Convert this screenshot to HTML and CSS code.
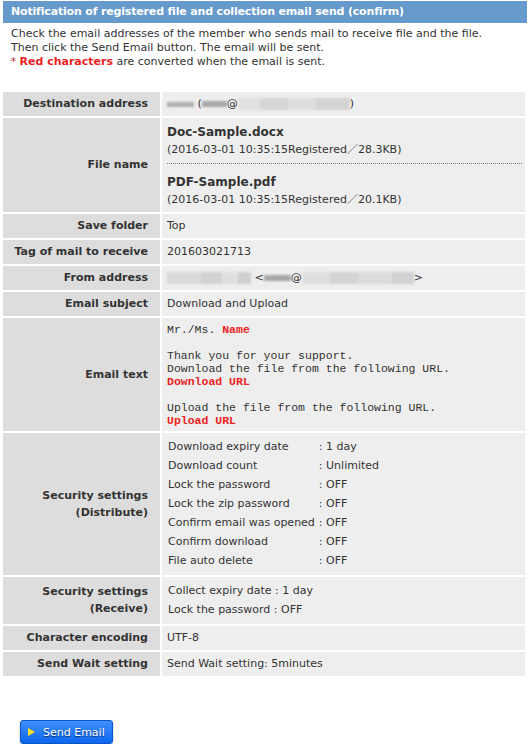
FILE: index.html
```html
<!DOCTYPE html>
<html lang="en">
<head>
<meta charset="utf-8">
<title>Notification of registered file and collection email send (confirm)</title>
<link rel="stylesheet" href="styles.css">
</head>
<body>
<div class="page">
  <h1 class="title">Notification of registered file and collection email send (confirm)</h1>
  <div class="intro">
    <p>Check the email addresses of the member who sends mail to receive file and the file.</p>
    <p>Then click the Send Email button. The email will be sent.</p>
    <p><span class="ast">*</span> <span class="red">Red characters</span> are converted when the email is sent.</p>
  </div>

  <table class="info">
    <tr>
      <th>Destination address</th>
      <td><span class="blur b-name1"></span> (<span class="blur b-user1"></span>@<span class="blur b-dom1"></span>)</td>
    </tr>
    <tr>
      <th>File name</th>
      <td class="files">
        <div class="file">
          <div class="fname">Doc-Sample.docx</div>
          <div class="fmeta">(2016-03-01 10:35:15Registered／28.3KB)</div>
        </div>
        <div class="file">
          <div class="fname">PDF-Sample.pdf</div>
          <div class="fmeta">(2016-03-01 10:35:15Registered／20.1KB)</div>
        </div>
      </td>
    </tr>
    <tr><th>Save folder</th><td>Top</td></tr>
    <tr><th>Tag of mail to receive</th><td>201603021713</td></tr>
    <tr>
      <th>From address</th>
      <td><span class="blur b-name2"></span> &lt;<span class="blur b-user2"></span>@<span class="blur b-dom2"></span>&gt;</td>
    </tr>
    <tr><th>Email subject</th><td>Download and Upload</td></tr>
    <tr>
      <th>Email text</th>
      <td class="mailcell"><pre class="mail">Mr./Ms. <b class="red">Name</b>

Thank you for your support.
Download the file from the following URL.
<b class="red">Download URL</b>

Upload the file from the following URL.
<b class="red">Upload URL</b></pre></td>
    </tr>
    <tr>
      <th class="two">Security settings<br>(Distribute)</th>
      <td class="setcell">
        <div class="settings">
          <span>Download expiry date</span><span>: 1 day</span>
          <span>Download count</span><span>: Unlimited</span>
          <span>Lock the password</span><span>: OFF</span>
          <span>Lock the zip password</span><span>: OFF</span>
          <span>Confirm email was opened</span><span>: OFF</span>
          <span>Confirm download</span><span>: OFF</span>
          <span>File auto delete</span><span>: OFF</span>
        </div>
      </td>
    </tr>
    <tr>
      <th class="two">Security settings<br>(Receive)</th>
      <td class="setcell">
        <div class="lines">
          <div>Collect expiry date : 1 day</div>
          <div>Lock the password : OFF</div>
        </div>
      </td>
    </tr>
    <tr><th>Character encoding</th><td>UTF-8</td></tr>
    <tr><th>Send Wait setting</th><td>Send Wait setting: 5minutes</td></tr>
  </table>

  <div class="actions">
    <button type="button" class="send"><span class="tri"></span>Send Email</button>
  </div>
</div>
</body>
</html>
```

FILE: styles.css
```css
* { box-sizing: border-box; }

body {
  margin: 0;
  background: #fff;
  color: #333;
  font-family: "DejaVu Sans", Verdana, sans-serif;
  font-size: 11px;
}

.page {
  padding: 1px 3px 0 3px;
}

.title {
  margin: 0;
  height: 22px;
  line-height: 22px;
  padding-left: 8px;
  background: #6699cc;
  color: #fff;
  font-size: 11px;
  font-weight: bold;
  letter-spacing: -0.17px;
}

.intro {
  margin-top: 4px;
  padding-left: 8px;
  line-height: 14px;
}
.intro p { margin: 0; }

.red { color: #ee2222; font-weight: bold; }
.ast { color: #b02222; font-size: 10px; }

.info {
  margin-top: 23px;
  width: 522px;
  table-layout: fixed;
  border-collapse: separate;
  border-spacing: 0;
}

.info th,
.info td {
  border-bottom: 2px solid #fff;
  vertical-align: middle;
  line-height: 15px;
  padding: 4px 5px 5px 5px;
}
.info tr:last-child th,
.info tr:last-child td { border-bottom: 0; }

.info th {
  width: 159px;
  background: #dddddd;
  border-right: 2px solid #fff;
  text-align: right;
  padding-right: 12px;
  font-weight: bold;
}
.info th.two { line-height: 17px; }

.info td {
  background: #eeeeee;
  padding-left: 5px;
}

/* blurred (masked) address parts */
.blur {
  display: inline-block;
  vertical-align: middle;
  filter: blur(1px);
  background: #c8c8c8;
}
.b-name1 { width: 27px; height: 5px; background: #b0b0b0; }
.b-user1 { width: 25px; height: 6px; background: #a8a8a8; }
.b-dom1 {
  width: 112px; height: 12px;
  background: linear-gradient(90deg, #e2e2e2 0 20%, #d6d6d6 20% 45%, #dedede 45% 70%, #d4d4d4 70% 100%);
}
.b-name2 {
  width: 84px; height: 12px;
  background: linear-gradient(90deg, #dadada 0 40%, #d2d2d2 40% 65%, #e0e0e0 65% 85%, #d0d0d0 85% 100%);
}
.b-user2 { width: 27px; height: 6px; background: #a8a8a8; }
.b-dom2 {
  width: 112px; height: 12px;
  background: linear-gradient(90deg, #e0e0e0 0 25%, #d4d4d4 25% 50%, #dcdcdc 50% 80%, #d2d2d2 80% 100%);
}

/* files */
.info td.files { padding: 0 3px 0 5px; }
.file { padding: 5px 0 5px; }
.file + .file {
  border-top: 1px dotted #777;
  padding-top: 9px;
  padding-bottom: 4px;
}
.fname {
  font-size: 12px;
  font-weight: bold;
  line-height: 18px;
}
.fmeta {
  line-height: 17px;
  font-family: "DejaVu Sans", "Noto Sans CJK JP", sans-serif;
}

/* email text */
.info td.mailcell { padding-top: 5px; padding-bottom: 4px; }
.mail {
  margin: 0;
  font-family: "Liberation Mono", "Courier New", monospace;
  font-size: 11.5px;
  line-height: 13px;
  color: #333;
}
.mail .red { color: #ee2222; }

/* settings */
.info td.setcell { padding-top: 4px; padding-bottom: 5px; padding-left: 6px; }
.settings {
  display: grid;
  grid-template-columns: max-content max-content;
  column-gap: 4px;
  line-height: 19px;
}
.lines { line-height: 19px; }

/* button */
.actions {
  padding: 44px 0 0 17px;
}
.send {
  display: inline-flex;
  align-items: center;
  height: 24px;
  width: 93px;
  padding: 0 0 0 7px;
  border: 1px solid #0a55c8;
  border-radius: 3px;
  background: linear-gradient(#3f90fa, #0c66ee);
  color: #fff;
  font-family: "DejaVu Sans", Verdana, sans-serif;
  font-size: 11px;
  text-shadow: 0 1px 1px #0a2f70;
  box-shadow: 0 1px 2px rgba(0, 0, 0, 0.3);
  cursor: pointer;
}
.tri {
  width: 0;
  height: 0;
  margin-right: 8px;
  border-top: 4px solid transparent;
  border-bottom: 4px solid transparent;
  border-left: 7px solid #f2e03a;
  filter: drop-shadow(0 0 0.5px #7a6a00);
}
```
